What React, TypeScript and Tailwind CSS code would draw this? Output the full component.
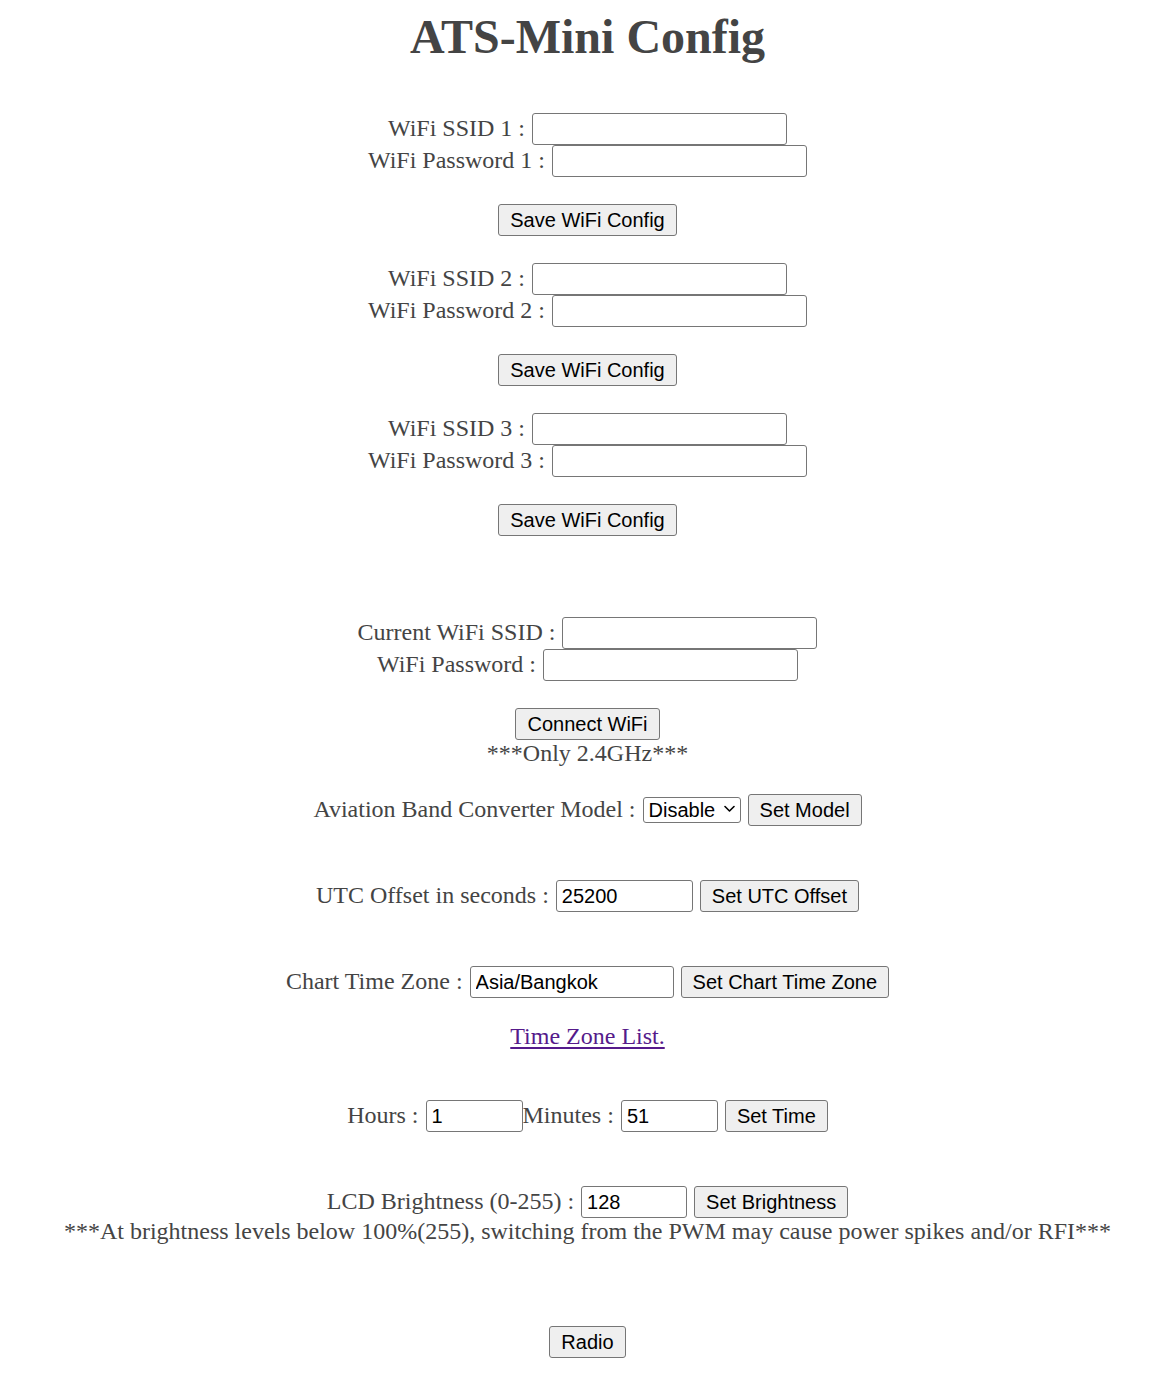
import React from "react";

const serif = { fontFamily: '"Liberation Serif", "Times New Roman", serif' };

function TextInput({ value = "", width = "w-[255px]" }: { value?: string; width?: string }) {
  return (
    <input
      type="text"
      defaultValue={value}
      className={`${width} h-[32px] border border-[#767676] rounded-[3px] bg-white px-[5px] text-[20px] text-black font-['Liberation_Sans',Arial,sans-serif] outline-none`}
    />
  );
}

function Btn({ children }: { children: React.ReactNode }) {
  return (
    <button className="h-[32px] px-[11px] border border-[#767676] rounded-[3px] bg-[#efefef] text-[20px] text-black font-['Liberation_Sans',Arial,sans-serif] leading-none">
      {children}
    </button>
  );
}

function Row({ label, children }: { label: string; children: React.ReactNode }) {
  return (
    <div className="flex items-center justify-center h-[32px] gap-[7px]">
      <span className="leading-[28px] -mt-[3px]">{label}</span>
      {children}
    </div>
  );
}

function WifiGroup({ n }: { n: number }) {
  return (
    <div className="flex flex-col items-center">
      <Row label={`WiFi SSID ${n} :`}>
        <TextInput />
      </Row>
      <Row label={`WiFi Password ${n} :`}>
        <TextInput />
      </Row>
      <div className="mt-[27px] flex">
        <Btn>Save WiFi Config</Btn>
      </div>
    </div>
  );
}

export default function App() {
  return (
    <div style={serif} className="w-full min-h-[1375px] bg-white text-[#444] text-[24px] leading-[28px] flex flex-col items-center pt-[9px] pl-[3px]">
      <h1 className="text-[48px] font-bold leading-[55px] text-[#444]">ATS-Mini Config</h1>

      <div className="mt-[49px] flex flex-col gap-[27px]">
        <WifiGroup n={1} />
        <WifiGroup n={2} />
        <WifiGroup n={3} />
      </div>

      {/* Current connection */}
      <div className="mt-[81px] flex flex-col items-center">
        <Row label="Current WiFi SSID :">
          <TextInput />
        </Row>
        <Row label="WiFi Password :">
          <TextInput />
        </Row>
        <div className="mt-[27px] flex">
          <Btn>Connect WiFi</Btn>
        </div>
        <p className="leading-[28px] -mt-[1px]">***Only 2.4GHz***</p>
      </div>

      <div className="mt-[27px] flex items-center justify-center h-[32px] gap-[7px]">
        <span className="leading-[28px] -mt-[3px]">Aviation Band Converter Model :</span>
        <div className="relative flex">
          <select
            defaultValue="0"
            className="appearance-none h-[26px] w-[98px] border border-[#767676] rounded-[3px] bg-white text-[20px] text-black font-['Liberation_Sans',Arial,sans-serif] pl-[5px] pr-[22px] leading-[24px]"
          >
            <option value="0">Disable</option>
            <option value="1">Model 1</option>
          </select>
          <svg
            className="absolute right-[6px] top-[8px] pointer-events-none"
            width="11"
            height="8"
            viewBox="0 0 11 8"
            fill="none"
          >
            <path d="M1 1.5 L5.5 6 L10 1.5" stroke="#000" strokeWidth="1.6" strokeLinecap="round" strokeLinejoin="round" />
          </svg>
        </div>
        <Btn>Set Model</Btn>
      </div>

      <div className="mt-[54px]">
        <Row label="UTC Offset in seconds :">
          <TextInput value="25200" width="w-[137px]" />
          <Btn>Set UTC Offset</Btn>
        </Row>
      </div>

      <div className="mt-[54px]">
        <Row label="Chart Time Zone :">
          <TextInput value="Asia/Bangkok" width="w-[204px]" />
          <Btn>Set Chart Time Zone</Btn>
        </Row>
      </div>

      <a href="#" className="mt-[24px] leading-[28px] text-[#551a8b] underline underline-offset-[3px]">
        Time Zone List.
      </a>

      <div className="mt-[50px] flex items-center justify-center h-[32px]">
        <span className="leading-[28px] -mt-[3px] mr-[7px]">Hours :</span>
        <TextInput value="1" width="w-[97px]" />
        <span className="leading-[28px] -mt-[3px] mr-[7px]">Minutes :</span>
        <TextInput value="51" width="w-[97px]" />
        <div className="ml-[7px] flex">
          <Btn>Set Time</Btn>
        </div>
      </div>

      <div className="mt-[54px] flex flex-col items-center">
        <Row label="LCD Brightness (0-255) :">
          <TextInput value="128" width="w-[106px]" />
          <Btn>Set Brightness</Btn>
        </Row>
        <p className="leading-[28px] -mt-[1px]">
          ***At brightness levels below 100%(255), switching from the PWM may cause power spikes and/or RFI***
        </p>
      </div>

      <div className="mt-[81px] flex">
        <Btn>Radio</Btn>
      </div>
    </div>
  );
}
